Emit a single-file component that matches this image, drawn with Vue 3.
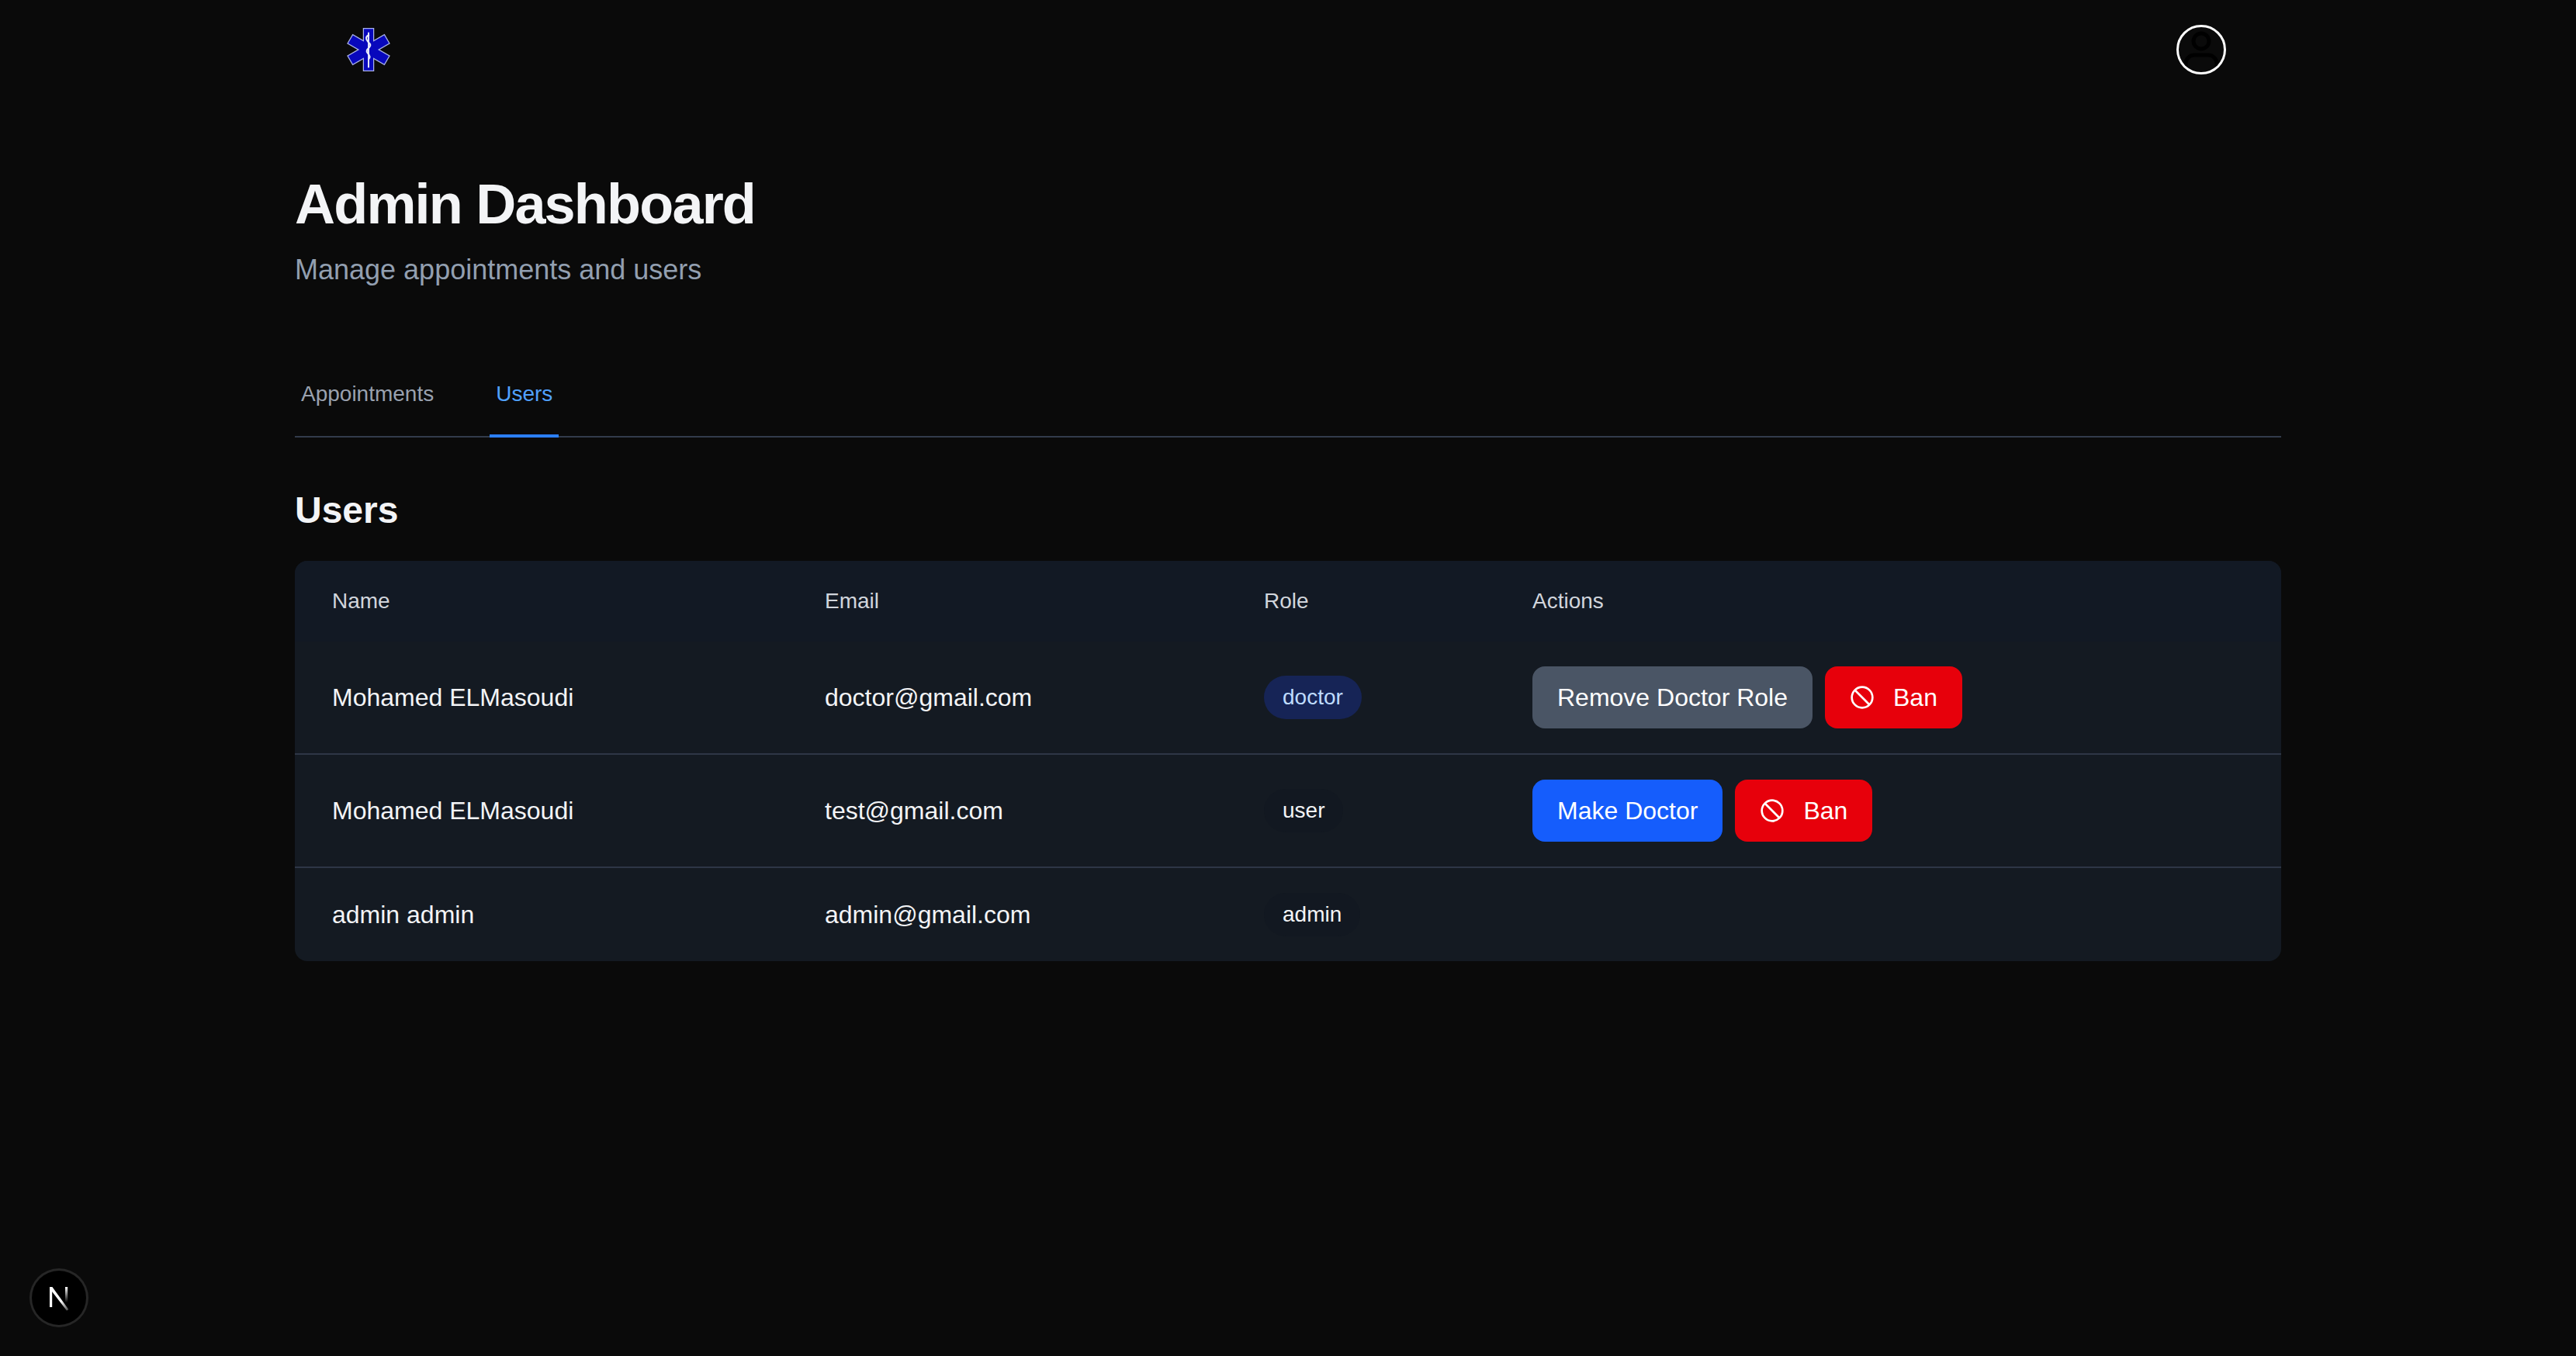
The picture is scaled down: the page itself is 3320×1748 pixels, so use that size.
<script setup>
import { ref } from 'vue'

const activeTab = ref('users')

const tabs = [
  { id: 'appointments', label: 'Appointments' },
  { id: 'users', label: 'Users' },
]

const users = [
  { name: 'Mohamed ELMasoudi', email: 'doctor@gmail.com', role: 'doctor' },
  { name: 'Mohamed ELMasoudi', email: 'test@gmail.com', role: 'user' },
  { name: 'admin admin', email: 'admin@gmail.com', role: 'admin' },
]

const armAngles = [0, 60, 120]
</script>

<template>
  <div class="page">
    <header class="navbar">
      <svg class="logo" viewBox="0 0 58 60">
        <g v-for="angle in armAngles" :key="angle" :transform="`rotate(${angle} 29 30)`">
          <rect x="21.5" y="1" width="15" height="58" fill="#a9b2e8" />
        </g>
        <g v-for="angle in armAngles" :key="`in-${angle}`" :transform="`rotate(${angle} 29 30)`">
          <rect x="22.8" y="2.3" width="12.4" height="55.4" fill="#0808bc" />
        </g>
        <path d="M29 7V54" stroke="#e8ebfa" stroke-width="2" fill="none" />
        <path
          d="M30 10c-5 2-5 6-2 9s5 5 2 8-5 5-2 8 4 5 1 8"
          stroke="#e8ebfa"
          stroke-width="2.2"
          fill="none"
        />
      </svg>
      <button class="avatar">
        <svg viewBox="0 0 58 58">
          <circle cx="29" cy="18" r="10" fill="none" stroke="#000" stroke-width="5" />
          <path d="M9 58V47a11 11 0 0 1 11-11h18a11 11 0 0 1 11 11v11" fill="none" stroke="#000" stroke-width="5" />
        </svg>
      </button>
    </header>

    <main class="container">
      <h1>Admin Dashboard</h1>
      <p class="subtitle">Manage appointments and users</p>

      <nav class="tabs">
        <button
          v-for="tab in tabs"
          :key="tab.id"
          class="tab"
          :class="{ active: activeTab === tab.id }"
          @click="activeTab = tab.id"
        >
          {{ tab.label }}
        </button>
      </nav>

      <h2>Users</h2>

      <table class="table">
        <colgroup>
          <col class="col-name" />
          <col class="col-email" />
          <col class="col-role" />
          <col />
        </colgroup>
        <thead>
          <tr>
            <th>Name</th>
            <th>Email</th>
            <th>Role</th>
            <th>Actions</th>
          </tr>
        </thead>
        <tbody>
          <tr v-for="user in users" :key="user.email">
            <td>{{ user.name }}</td>
            <td>{{ user.email }}</td>
            <td>
              <span class="badge" :class="user.role">{{ user.role }}</span>
            </td>
            <td>
              <div v-if="user.role !== 'admin'" class="actions">
                <button v-if="user.role === 'doctor'" class="btn gray">Remove Doctor Role</button>
                <button v-else class="btn blue">Make Doctor</button>
                <button class="btn red">
                  <svg class="ban" viewBox="0 0 24 24" fill="none" stroke="currentColor" stroke-width="2">
                    <circle cx="12" cy="12" r="10" />
                    <path d="m4.9 4.9 14.2 14.2" />
                  </svg>
                  Ban
                </button>
              </div>
            </td>
          </tr>
        </tbody>
      </table>
    </main>

    <button class="dev-badge">
      <svg viewBox="0 0 40 40">
        <defs>
          <linearGradient id="nfade" x1="0" y1="0" x2="1" y2="1">
            <stop offset="0.6" stop-color="#fff" />
            <stop offset="1" stop-color="#fff" stop-opacity="0.25" />
          </linearGradient>
          <linearGradient id="nfade2" x1="0" y1="0" x2="0" y2="1">
            <stop offset="0" stop-color="#fff" />
            <stop offset="1" stop-color="#fff" stop-opacity="0" />
          </linearGradient>
        </defs>
        <rect x="8" y="6" width="3.2" height="26" fill="#fff" />
        <path d="M8 6h3.4l21 29-2.4 1.6L8 8z" fill="url(#nfade)" />
        <rect x="28" y="6" width="3.2" height="20" fill="url(#nfade2)" />
      </svg>
    </button>
  </div>
</template>

<style scoped>
.page {
  min-height: 1748px;
  background: #0a0a0a;
  color: #f3f4f6;
  font-family: 'Liberation Sans', Arial, sans-serif;
}

.navbar {
  height: 128px;
  width: 2560px;
  margin: 0 auto;
  padding: 0 71px 0 67px;
  box-sizing: border-box;
  display: flex;
  align-items: center;
  justify-content: space-between;
}

.logo {
  width: 56px;
  height: 58px;
}

.avatar {
  width: 64px;
  height: 64px;
  padding: 0;
  border: 3px solid #fff;
  border-radius: 50%;
  background: transparent;
  overflow: hidden;
  box-sizing: border-box;
}

.avatar svg {
  display: block;
  width: 100%;
  height: 100%;
}

.container {
  width: 2560px;
  margin: 0 auto;
  padding-top: 95px;
}

h1 {
  margin: 0;
  font-size: 72px;
  line-height: 80px;
  font-weight: 700;
  letter-spacing: -1.8px;
  color: #f3f4f6;
}

.subtitle {
  margin: 17px 0 0;
  font-size: 36px;
  line-height: 56px;
  color: #929fb0;
}

.tabs {
  margin-top: 79px;
  display: flex;
  gap: 64px;
  border-bottom: 2px solid #323b4b;
  height: 107px;
}

.tab {
  height: 109px;
  padding: 0 8px;
  border: 0;
  border-bottom: 4px solid transparent;
  background: none;
  font: inherit;
  font-size: 28px;
  line-height: 40px;
  color: #99a1af;
}

.tab.active {
  color: #51a2ff;
  border-bottom-color: #2b7fff;
}

h2 {
  margin: 62px 0 0;
  font-size: 48px;
  line-height: 64px;
  font-weight: 700;
  color: #f3f4f6;
}

.table {
  margin-top: 33px;
  width: 100%;
  table-layout: fixed;
  border-collapse: separate;
  border-spacing: 0;
  border-radius: 16px;
  overflow: hidden;
  background: #141a22;
}

.col-name {
  width: 635px;
}

.col-email {
  width: 566px;
}

.col-role {
  width: 346px;
}

thead {
  background: #121924;
}

th {
  padding: 32px 48px;
  text-align: left;
  font-size: 28px;
  line-height: 40px;
  font-weight: 400;
  color: #d1d5dc;
}

td {
  padding: 32px 48px;
  font-size: 32px;
  line-height: 48px;
  color: #f3f4f6;
  border-bottom: 2px solid #2e3646;
  vertical-align: middle;
}

tbody tr:last-child td {
  border-bottom: 0;
}

.badge {
  display: inline-block;
  padding: 8px 24px;
  border-radius: 999px;
  font-size: 28px;
  line-height: 40px;
  vertical-align: middle;
}

.badge.doctor {
  background: #162456;
  color: #bedbff;
}

.badge.user,
.badge.admin {
  background: #121821;
  color: #f3f4f6;
}

.actions {
  display: flex;
  gap: 16px;
}

.btn {
  display: inline-flex;
  align-items: center;
  gap: 24px;
  height: 80px;
  padding: 0 32px;
  border: 0;
  border-radius: 16px;
  font: inherit;
  font-size: 32px;
  color: #fff;
}

.btn.gray {
  background: #4a5565;
}

.btn.blue {
  background: #155dfc;
}

.btn.red {
  background: #e7000b;
}

.ban {
  width: 32px;
  height: 32px;
}

.dev-badge {
  position: fixed;
  left: 41px;
  bottom: 40px;
  width: 70px;
  height: 70px;
  padding: 15px;
  border: 0;
  border-radius: 50%;
  background: #000;
  box-shadow: 0 0 0 3px #262626;
  box-sizing: border-box;
}

.dev-badge svg {
  display: block;
  width: 100%;
  height: 100%;
  overflow: visible;
}
</style>

<style>
body {
  background: #0a0a0a;
}
</style>
